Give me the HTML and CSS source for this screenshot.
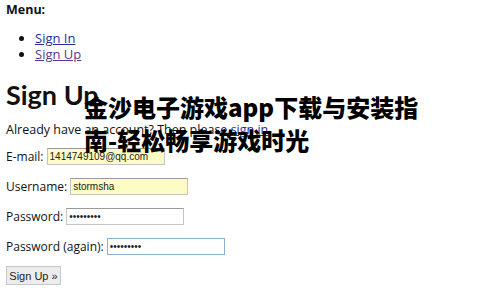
FILE: index.html
```html
<!DOCTYPE html>
<html lang="en">
<head>
    <meta charset="UTF-8">
    <meta name="viewport" content="width=device-width, initial-scale=1.0">
    <title>Sign Up</title>
    <link rel="stylesheet" href="styles.css">
</head>
<body>
    <div class="page">
        <h3 class="menu-title">Menu:</h3>
        <ul class="menu">
            <li><a href="#">Sign In</a></li>
            <li><a href="#" class="visited">Sign Up</a></li>
        </ul>

        <h1>Sign Up</h1>
        <p class="note">Already have an account? Then please <a href="#">sign in</a>.</p>

        <form class="signup">
            <div class="field">
                <label for="email">E-mail:</label>
                <input class="filled" id="email" type="text" value="1414749109@qq.com">
            </div>
            <div class="field">
                <label for="username">Username:</label>
                <input class="filled" id="username" type="text" value="stormsha">
            </div>
            <div class="field">
                <label for="password1">Password:</label>
                <input id="password1" type="password" value="123456789">
            </div>
            <div class="field">
                <label for="password2">Password (again):</label>
                <input class="active" id="password2" type="password" value="123456789">
            </div>
            <button type="submit">Sign Up &raquo;</button>
        </form>

        <div class="banner">金沙电子游戏app下载与安装指<br>南-轻松畅享游戏时光</div>
    </div>
</body>
</html>
```

FILE: styles.css
```css
* {
    margin: 0;
    padding: 0;
    box-sizing: border-box;
}

body {
    background: #fff;
    color: #111;
    font-family: 'Open Sans', 'Noto Sans', sans-serif;
    font-size: 13px;
    line-height: 16px;
}

.page {
    position: relative;
    padding: 2px 6px;
}

a {
    color: #2b2ba6;
}

a.visited {
    color: #5b3590;
}

.menu-title {
    font-size: 12.5px;
    font-weight: bold;
}

.menu {
    margin-top: 12px;
    padding-left: 29px;
}

h1 {
    margin-top: 16px;
    font-family: Lato, 'Open Sans', sans-serif;
    font-size: 27px;
    line-height: 34px;
    font-weight: bold;
}

.note {
    margin-top: 10px;
    font-size: 12.5px;
}

.signup {
    margin-top: 10px;
    display: flex;
    flex-direction: column;
    align-items: flex-start;
    gap: 13px;
}

.field {
    display: flex;
    align-items: center;
    gap: 3px;
    height: 17px;
    font-size: 12px;
}

input {
    width: 118px;
    height: 17px;
    padding: 0 2px;
    border: 1px solid #c4c4c4;
    border-top-color: #9a9a9a;
    font-family: 'Liberation Sans', Arial, sans-serif;
    font-size: 10px;
    color: #222;
    background: #fff;
    outline: none;
}

input.filled {
    background: #fdfcc4;
}

input.active {
    border-color: #8cb0d4;
}

button {
    margin-top: -2px;
    width: 55px;
    height: 19px;
    border: 1px solid #c8c8c8;
    background: #ececec;
    font-family: 'Liberation Sans', Arial, sans-serif;
    font-size: 11px;
    color: #222;
}

.banner {
    position: absolute;
    left: 84px;
    top: 90px;
    font-family: 'Noto Sans CJK SC', sans-serif;
    font-size: 24px;
    line-height: 33px;
    font-weight: 900;
    color: #000;
}
```
